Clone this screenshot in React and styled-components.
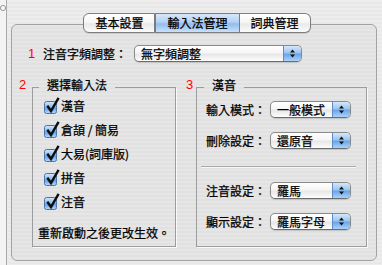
import React from "react";
import styled, { createGlobalStyle } from "styled-components";

const Global = createGlobalStyle`
  html, body { margin: 0; padding: 0; }
  body {
    width: 382px; height: 265px; overflow: hidden;
    font-family: "Noto Sans CJK TC", "Noto Sans CJK SC", sans-serif;
    font-size: 12px; color: #000;
    -webkit-text-stroke: 0.25px #000;
    background: repeating-linear-gradient(180deg, #ededed 0px, #ededed 2px, #e8e8e8 2px, #e8e8e8 4px);
  }
`;

const Window = styled.div`
  display: flex;
  height: 265px;
`;

const LeftStrip = styled.div`
  width: 7px;
  border-right: 1px solid #a9a9a9;
  background: #f3f3f3;
  display: flex;
  justify-content: center;
  padding-top: 4px;
  box-sizing: border-box;
`;

const Main = styled.div`
  flex: 1;
  display: flex;
  flex-direction: column;
  padding: 13px 5px 4px 4px;
`;

const TabBar = styled.div`
  position: relative;
  z-index: 1;
  display: flex;
  justify-content: center;
  padding-left: 6px;
  height: 20px;
`;

const Tab = styled.div`
  height: 20px;
  box-sizing: border-box;
  padding: 0 11px;
  display: flex;
  align-items: center;
  border: 1px solid #7d7d7d;
  border-left-width: ${p => (p.$first ? 1 : 0)}px;
  border-radius: ${p => (p.$first ? "6px 0 0 6px" : p.$last ? "0 6px 6px 0" : "0")};
  background: ${p =>
    p.$active
      ? "linear-gradient(#d7e7f9, #b3d1f2 45%, #93bdec 55%, #c7e1fb)"
      : "linear-gradient(#ffffff, #f6f6f6 45%, #e9e9e9 55%, #fbfbfb)"};
  box-shadow: 0 1px 1px rgba(0,0,0,0.12);
  line-height: 14px;
  ${p => (p.$active ? "border-left: 1px solid #7d7d7d; border-right: 1px solid #7d7d7d;" : "")}
`;

const Panel = styled.div`
  flex: 1;
  margin-top: -9px;
  border: 1px solid #a3a3a3;
  border-radius: 6px;
  background: repeating-linear-gradient(180deg, #e6e6e6 0px, #e6e6e6 2px, #e1e1e1 2px, #e1e1e1 4px);
  padding: 20px 0 0 0;
  box-sizing: border-box;
`;

const Num = styled.span`
  font-family: "Liberation Sans", Arial, sans-serif;
  font-size: 13px;
  color: #f00;
  -webkit-text-stroke: 0;
  width: 7px;
  line-height: 14px;
`;

const TopRow = styled.div`
  display: flex;
  align-items: center;
  height: 17px;
  padding-left: 16px;
`;

const TopLabel = styled.span`
  margin-left: 8px;
  width: 91px;
  line-height: 14px;
`;

const Popup = styled.div`
  display: flex;
  width: ${p => p.$w}px;
  height: 17px;
  box-sizing: border-box;
  border: 1px solid #8a8a8a;
  border-bottom-color: #6c6c6c;
  border-radius: 5px;
  overflow: hidden;
  background: linear-gradient(#ffffff, #f5f5f5 45%, #e7e7e7 55%, #fdfdfd);
  box-shadow: 0 1px 1px rgba(0,0,0,0.15);
`;

const PopupText = styled.span`
  flex: 1;
  padding-left: 6px;
  line-height: 15px;
  white-space: nowrap;
`;

const PopupArrows = styled.span`
  width: 17px;
  border-left: 1px solid #5d8cc6;
  background: linear-gradient(#d4e7fb, #9cc5ef 45%, #6aa5e8 55%, #a9d3fa);
  display: flex;
  align-items: center;
  justify-content: center;
`;

const GroupsRow = styled.div`
  display: flex;
  align-items: stretch;
  margin-top: 16px;
  padding-left: 7px;
  height: 169px;
`;

const GroupWrap = styled.div`
  display: flex;
  align-items: flex-start;
  margin-left: ${p => p.$ml}px;
`;

const GroupNum = styled(Num)`
  margin-right: ${p => p.$gap}px;
`;

const Group = styled.fieldset`
  margin: 0;
  padding: 0;
  width: ${p => p.$w}px;
  height: 169px;
  box-sizing: border-box;
  border: 1px solid #9c9c9c;
  box-shadow: 1px 1px 0 #fafafa;
  display: flex;
  flex-direction: column;
  min-width: 0;
`;

const Legend = styled.legend`
  margin-left: ${p => p.$ml}px;
  padding: 0 8px 5px 8px;
  line-height: 14px;
`;

const CheckList = styled.div`
  display: flex;
  flex-direction: column;
  gap: 7px;
  padding-left: 10px;
`;

const CheckRow = styled.div`
  display: flex;
  align-items: center;
  height: 17px;
  gap: 1px;
  line-height: 14px;
`;

const Note = styled.div`
  margin-top: 15px;
  padding-left: 5px;
  line-height: 16px;
  white-space: nowrap;
`;

const Section = styled.div`
  display: flex;
  flex-direction: column;
  gap: 14px;
  padding-left: 9px;
  margin-top: ${p => p.$mt}px;
`;

const FieldRow = styled.div`
  display: flex;
  align-items: center;
  height: 17px;
`;

const FieldLabel = styled.span`
  width: 64px;
  line-height: 14px;
`;

const Separator = styled.div`
  height: 1px;
  background: #a8a8a8;
  box-shadow: 0 1px 0 #f8f8f8;
  margin: 17px 10px 0 4px;
`;

const Knob = () => (
  <svg width="7" height="8" viewBox="0 0 7 8">
    <circle cx="3.5" cy="4" r="3" fill="#f7f7f7" stroke="#8a8a8a" strokeWidth="1" />
  </svg>
);

const Arrows = () => (
  <svg width="7" height="11" viewBox="0 0 7 11">
    <path d="M1 4.5 L6 4.5 L3.5 1.5 Z" fill="#111" />
    <path d="M1 6.5 L6 6.5 L3.5 9.5 Z" fill="#111" />
  </svg>
);

const Check = () => (
  <svg width="17" height="17" viewBox="0 0 17 17">
    <defs>
      <linearGradient id="cbg" x1="0" y1="0" x2="0" y2="1">
        <stop offset="0" stopColor="#d3e6fa" />
        <stop offset="0.45" stopColor="#8ebdf0" />
        <stop offset="0.55" stopColor="#5f9de6" />
        <stop offset="1" stopColor="#b5dafc" />
      </linearGradient>
    </defs>
    <rect x="1.5" y="4.5" width="12" height="12" rx="2" fill="url(#cbg)" stroke="#4a76ab" />
    <path d="M4.3 8.8 L8 14 L15.6 0.8" fill="none" stroke="#0d0d0d" strokeWidth="2.4" strokeLinejoin="miter" />
  </svg>
);

const PopupButton = ({ w, children }) => (
  <Popup $w={w}>
    <PopupText>{children}</PopupText>
    <PopupArrows><Arrows /></PopupArrows>
  </Popup>
);

const methods = ["漢音", "倉頡 / 簡易", "大易(詞庫版)", "拼音", "注音"];

export default function App() {
  return (
    <>
      <Global />
      <Window>
        <LeftStrip><Knob /></LeftStrip>
        <Main>
          <TabBar>
            <Tab $first>基本設置</Tab>
            <Tab $active>輸入法管理</Tab>
            <Tab $last>詞典管理</Tab>
          </TabBar>
          <Panel>
            <TopRow>
              <Num>1</Num>
              <TopLabel>注音字頻調整：</TopLabel>
              <PopupButton w={168}>無字頻調整</PopupButton>
            </TopRow>
            <GroupsRow>
              <GroupWrap $ml={0}>
                <GroupNum $gap={6}>2</GroupNum>
                <Group $w={144}>
                  <Legend $ml={6}>選擇輸入法</Legend>
                  <CheckList>
                    {methods.map(m => (
                      <CheckRow key={m}><Check />{m}</CheckRow>
                    ))}
                  </CheckList>
                  <Note>重新啟動之後更改生效。</Note>
                </Group>
              </GroupWrap>
              <GroupWrap $ml={10}>
                <GroupNum $gap={3}>3</GroupNum>
                <Group $w={171}>
                  <Legend $ml={7}>漢音</Legend>
                  <Section $mt={4}>
                    <FieldRow><FieldLabel>輸入模式：</FieldLabel><PopupButton w={81}>一般模式</PopupButton></FieldRow>
                    <FieldRow><FieldLabel>刪除設定：</FieldLabel><PopupButton w={81}>還原音</PopupButton></FieldRow>
                  </Section>
                  <Separator />
                  <Section $mt={15}>
                    <FieldRow><FieldLabel>注音設定：</FieldLabel><PopupButton w={81}>羅馬</PopupButton></FieldRow>
                    <FieldRow><FieldLabel>顯示設定：</FieldLabel><PopupButton w={81}>羅馬字母</PopupButton></FieldRow>
                  </Section>
                </Group>
              </GroupWrap>
            </GroupsRow>
          </Panel>
        </Main>
      </Window>
    </>
  );
}
